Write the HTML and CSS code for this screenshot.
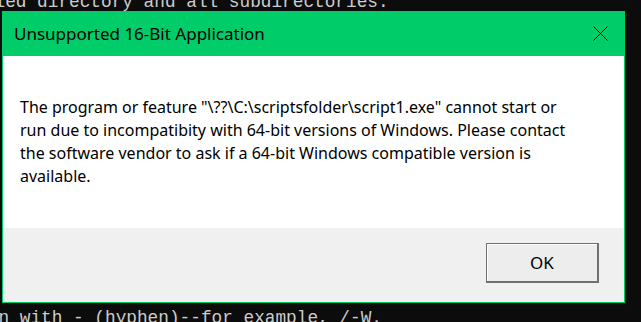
FILE: index.html
```html
<!DOCTYPE html>
<html>
<head>
<meta charset="utf-8">
<link rel="stylesheet" href="styles.css">
</head>
<body>
<div class="console">
  <div class="line line-top">led directory and all subdirectories.</div>
  <div class="line line-bottom">n with - (hyphen)--for example, /-W.</div>
</div>
<div class="dialog">
  <div class="titlebar">
    <span class="title">Unsupported 16-Bit Application</span>
    <svg class="close" width="15" height="15" viewBox="0 0 15 15"><path d="M0.5 0.5 L14.5 14.5 M14.5 0.5 L0.5 14.5" stroke="#000" stroke-width="1" fill="none"/></svg>
  </div>
  <div class="content">
    <p class="message">The program or feature "\??\C:\scriptsfolder\script1.exe" cannot start or run due to incompatibity with 64-bit versions of Windows. Please contact the software vendor to ask if a 64-bit Windows compatible version is available.</p>
  </div>
  <div class="footer">
    <button class="ok">OK</button>
  </div>
</div>
</body>
</html>
```
FILE: styles.css
```css
html, body {
  margin: 0;
  padding: 0;
  width: 641px;
  height: 322px;
  overflow: hidden;
  background: #0c0c0c;
}
.console {
  height: 322px;
  display: flex;
  flex-direction: column;
  justify-content: space-between;
  font-family: "Liberation Mono", monospace;
  font-size: 17.75px;
  line-height: 20px;
  color: #cccccc;
  white-space: pre;
}
.line-top {
  margin-top: -7.7px;
  text-indent: -5.5px;
}
.line-bottom {
  margin-bottom: -6px;
  text-indent: -1.5px;
}
.dialog {
  position: absolute;
  left: 2px;
  top: 11px;
  width: 623px;
  height: 292px;
  box-sizing: border-box;
  border: 1px solid #00cc6a;
  background: #ffffff;
  display: flex;
  flex-direction: column;
  font-family: "Noto Sans", sans-serif;
}
.titlebar {
  height: 44px;
  background: #00cc6a;
  display: flex;
  align-items: center;
  justify-content: space-between;
  padding: 0 17px 0 11px;
  margin: 0 -1px 0 0;
}
.title {
  font-size: 17px;
  color: #000;
  margin-top: -1px;
}
.close {
  display: block;
  margin-top: -2px;
}
.content {
  height: 172px;
  box-sizing: border-box;
  padding: 40px 46px 0 17px;
}
.message {
  margin: 0;
  font-size: 16px;
  line-height: 23px;
  color: #000;
}
.footer {
  flex: 1;
  background: #f0f0f0;
  display: flex;
  justify-content: flex-end;
  align-items: flex-start;
  padding: 15px 25px 0 0;
}
.ok {
  width: 113px;
  height: 40px;
  box-sizing: border-box;
  border: 1px solid #707070;
  border-right-width: 2px;
  border-bottom-width: 2px;
  box-shadow: inset 1px 1px 0 #ffffff;
  background: #ededed;
  font-family: "Noto Sans", sans-serif;
  font-size: 17px;
  color: #000;
  padding: 0;
}
```
